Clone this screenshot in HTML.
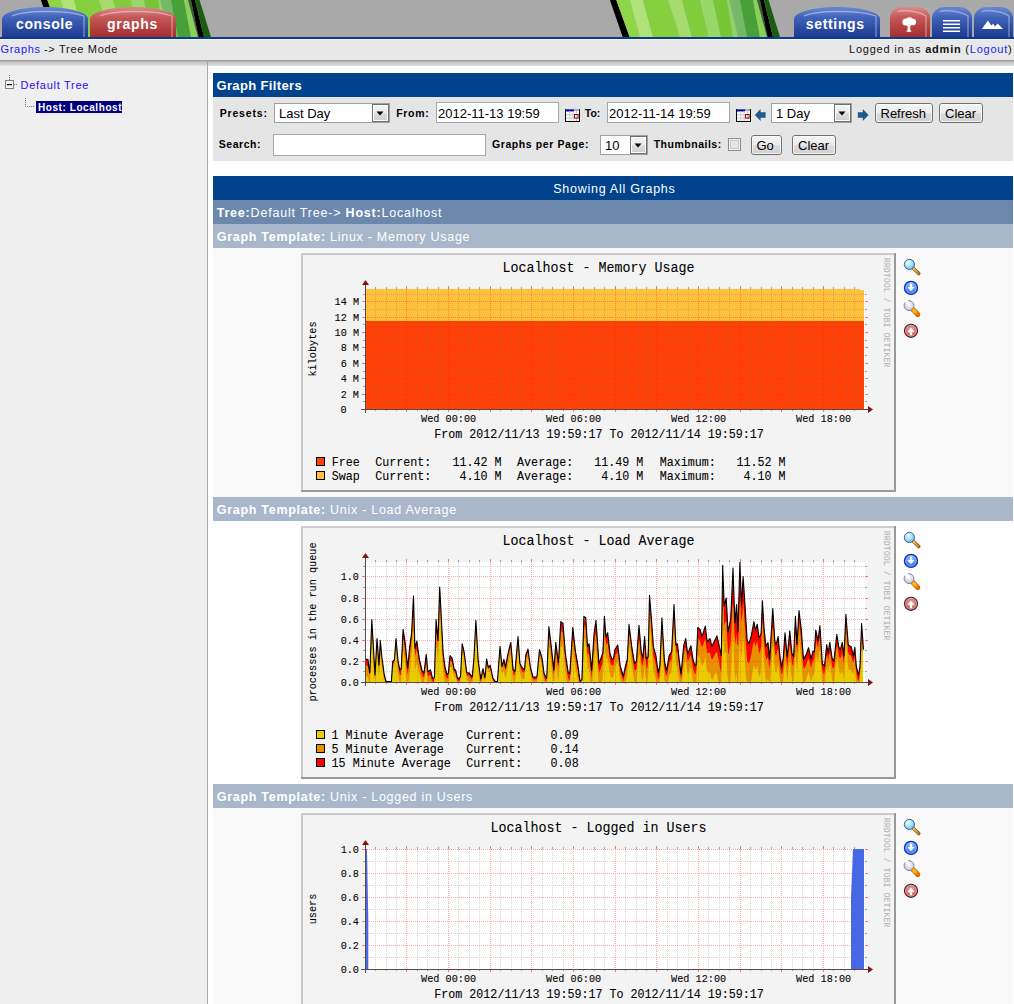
<!DOCTYPE html>
<html><head><meta charset="utf-8">
<style>
*{margin:0;padding:0}
html,body{width:1014px;height:1004px;overflow:hidden;background:#fff;font-family:"Liberation Sans",sans-serif;position:relative}
.a{position:absolute}
svg text{white-space:pre}
</style></head><body>
<svg class="a" style="left:0;top:0" width="1014" height="39" viewBox="0 0 1014 39">
<defs><linearGradient id="gb" x1="0" y1="0" x2="0" y2="1"><stop offset="0" stop-color="#6a88d4"/><stop offset=".35" stop-color="#4062b8"/><stop offset="1" stop-color="#1c3a90"/></linearGradient>
<linearGradient id="gr" x1="0" y1="0" x2="0" y2="1"><stop offset="0" stop-color="#dc8a8a"/><stop offset=".35" stop-color="#c45858"/><stop offset="1" stop-color="#a42e2e"/></linearGradient></defs>
<rect width="1014" height="37" fill="#a9a9a9"/>
<path d="M40.9 0L47.3 0L60.6 37L53.7 37Z" fill="#000"/>
<path d="M47.3 0L61.0 0L71.0 37L60.6 37Z" fill="#8fd548"/>
<path d="M61.0 0L74.0 0L84.0 37L71.0 37Z" fill="#b0e27a"/>
<path d="M74.0 0L99.0 0L111.0 37L84.0 37Z" fill="#86cf3f"/>
<path d="M99.0 0L113.0 0L123.0 37L111.0 37Z" fill="#a6dc6e"/>
<path d="M113.0 0L131.0 0L139.5 37L123.0 37Z" fill="#80cc3c"/>
<path d="M131.0 0L144.0 0L152.0 37L139.5 37Z" fill="#98d868"/>
<path d="M144.0 0L158.0 0L164.0 37L152.0 37Z" fill="#76c636"/>
<path d="M158.0 0L160.5 0L169.0 37L164.0 37Z" fill="#90d468"/>
<path d="M160.5 0L171.0 0L178.0 37L169.0 37Z" fill="#74b868"/>
<path d="M171.0 0L184.0 0L191.0 37L178.0 37Z" fill="#48a038"/>
<path d="M184.0 0L188.0 0L198.0 37L191.0 37Z" fill="#88d058"/>
<path d="M188.0 0L191.0 0L198.5 37L198.0 37Z" fill="#3a6030"/>
<path d="M191.0 0L195.0 0L204.0 37L198.5 37Z" fill="#000"/>
<path d="M195.0 0L199.5 0L211.0 37L204.0 37Z" fill="#1a5c10"/>
<path d="M609.9 0L616.3 0L629.6 37L622.7 37Z" fill="#000"/>
<path d="M616.3 0L630.0 0L640.0 37L629.6 37Z" fill="#8fd548"/>
<path d="M630.0 0L643.0 0L653.0 37L640.0 37Z" fill="#b0e27a"/>
<path d="M643.0 0L668.0 0L680.0 37L653.0 37Z" fill="#86cf3f"/>
<path d="M668.0 0L682.0 0L692.0 37L680.0 37Z" fill="#a6dc6e"/>
<path d="M682.0 0L700.0 0L708.5 37L692.0 37Z" fill="#80cc3c"/>
<path d="M700.0 0L713.0 0L721.0 37L708.5 37Z" fill="#98d868"/>
<path d="M713.0 0L727.0 0L733.0 37L721.0 37Z" fill="#76c636"/>
<path d="M727.0 0L729.5 0L738.0 37L733.0 37Z" fill="#90d468"/>
<path d="M729.5 0L740.0 0L747.0 37L738.0 37Z" fill="#74b868"/>
<path d="M740.0 0L753.0 0L760.0 37L747.0 37Z" fill="#48a038"/>
<path d="M753.0 0L757.0 0L767.0 37L760.0 37Z" fill="#88d058"/>
<path d="M757.0 0L760.0 0L767.5 37L767.0 37Z" fill="#3a6030"/>
<path d="M760.0 0L764.0 0L773.0 37L767.5 37Z" fill="#000"/>
<path d="M764.0 0L768.5 0L780.0 37L773.0 37Z" fill="#1a5c10"/>
<path d="M2 37V19C2 12.4 21.4 7 45.0 7C68.7 7 88 12.4 88 19V37Z" fill="url(#gb)"/><path d="M12 16C23.5 10.5 66.5 9.5 84 16V37" fill="none" stroke="#fff" stroke-opacity=".4" stroke-width="1.3"/><path d="M90 37V19C90 12.4 109.3 7 133.0 7C156.7 7 176 12.4 176 19V37Z" fill="url(#gr)"/><path d="M100 16C111.5 10.5 154.5 9.5 172 16V37" fill="none" stroke="#fff" stroke-opacity=".4" stroke-width="1.3"/><path d="M794 37V19C794 12.4 813.4 7 837.0 7C860.6 7 880 12.4 880 19V37Z" fill="url(#gb)"/><path d="M804 16C815.5 10.5 858.5 9.5 876 16V37" fill="none" stroke="#fff" stroke-opacity=".4" stroke-width="1.3"/><path d="M890 37V18C890 11.9 895.9 7 903 7H917C924.1 7 930 11.9 930 18V37Z" fill="url(#gr)"/><path d="M898 12C897.8 10 917.0 9.5 926 16V37" fill="none" stroke="#fff" stroke-opacity=".4" stroke-width="1.3"/><path d="M932 37V18C932 11.9 937.9 7 945 7H959C966.1 7 972 11.9 972 18V37Z" fill="url(#gb)"/><path d="M940 12C939.8 10 959.0 9.5 968 16V37" fill="none" stroke="#fff" stroke-opacity=".4" stroke-width="1.3"/><path d="M974 37V18C974 11.9 979.9 7 987 7H1000C1007.1 7 1013 11.9 1013 18V37Z" fill="url(#gb)"/><path d="M982 12C981.8 10 1000.0 9.5 1009 16V37" fill="none" stroke="#fff" stroke-opacity=".4" stroke-width="1.3"/>
<rect y="37" width="1014" height="2" fill="#0b3a94"/>
<g fill="#fff" font-family="Liberation Sans" font-weight="bold" font-size="14">
<text x="16" y="29" letter-spacing="0.62">console</text>
<text x="107" y="29" letter-spacing="0.72">graphs</text>
<text x="805.8" y="29" letter-spacing="0.66">settings</text>
</g>
<g fill="#fff">
<g><circle cx="906" cy="22" r="3.6"/><circle cx="909.5" cy="20.6" r="3.4"/><circle cx="912.8" cy="22" r="3.3"/><circle cx="909" cy="23.2" r="3"/><rect x="907.6" y="24" width="2.6" height="7.6"/><rect x="906.6" y="30.4" width="4.6" height="1.3"/></g>
<rect x="943" y="20" width="17" height="1.5"/><rect x="943" y="23.5" width="17" height="1.5"/><rect x="943" y="27" width="17" height="1.5"/><rect x="943" y="30.5" width="17" height="1.5"/>
<path d="M981.8 29L988 20.5L991.2 25.6L993.2 23.8L995 26.4L997.6 23.4L1003 29Z"/>
</g>
</svg>
<svg class="a" style="left:0;top:39px" width="1014" height="965" viewBox="0 39 1014 965">
<defs><linearGradient id="btn" x1="0" y1="0" x2="0" y2="1"><stop offset="0" stop-color="#f4f4f4"/><stop offset=".5" stop-color="#ebebeb"/><stop offset=".5" stop-color="#dddddd"/><stop offset="1" stop-color="#cfcfcf"/></linearGradient><linearGradient id="shd" x1="0" y1="0" x2="0" y2="1"><stop offset="0" stop-color="#989898"/><stop offset=".4" stop-color="#c4c4c4"/><stop offset="1" stop-color="#e2e2e2"/></linearGradient></defs><rect x="0" y="39" width="1014" height="21" fill="#e8e8e8"/><rect x="0" y="39" width="1014" height="1" fill="#f4f4ef"/><text x="0.5" y="53" font-size="11" font-weight="normal" fill="#1a1aee" letter-spacing="0.7" font-family="Liberation Sans">Graphs</text><text x="44" y="53" font-size="11" font-weight="normal" fill="#111" letter-spacing="0.7" font-family="Liberation Sans">-&gt; Tree Mode</text><text x="849" y="53" font-size="11" fill="#111" letter-spacing="0.78" font-family="Liberation Sans">Logged in as <tspan font-weight="bold">admin</tspan> (<tspan fill="#1a1aee">Logout</tspan>)</text><rect x="0" y="60" width="207" height="944" fill="#efefef"/><rect x="208" y="60" width="806" height="944" fill="#fff"/><rect x="0" y="60" width="1014" height="6" fill="url(#shd)"/><rect x="207" y="60" width="1" height="944" fill="#a8a8a8"/><rect x="5.5" y="80.5" width="8" height="8" fill="#f4f4f4" stroke="#808080"/><rect x="7" y="84" width="5" height="1.2" fill="#000"/><path d="M9.5 75v5M14 84.5h4M25.5 98v8M25 106.5h10" stroke="#777" stroke-dasharray="1 1" fill="none"/><text x="20.5" y="89" font-size="11" font-weight="normal" fill="#2a10f0" letter-spacing="0.73" font-family="Liberation Sans">Default Tree</text><rect x="36" y="101" width="86" height="12" fill="#00007f"/><text x="38" y="110.8" font-size="10" font-weight="bold" fill="#fff" letter-spacing="0.57" font-family="Liberation Sans">Host: Localhost</text><rect x="213" y="73" width="800" height="24" fill="#00438c"/><text x="216.5" y="89.5" font-size="13" font-weight="bold" fill="#fff" letter-spacing="0.35" font-family="Liberation Sans">Graph Filters</text><rect x="213" y="97" width="800" height="64" fill="#e5e5e5"/><text x="219.7" y="116.5" font-size="10.5" font-weight="bold" fill="#000" letter-spacing="0.83" font-family="Liberation Sans">Presets:</text><rect x="274.5" y="103.5" width="115" height="19" fill="#fff" stroke="#a0a0a0"/><rect x="372.5" y="104.5" width="16" height="17" fill="url(#btn)" stroke="#6f6f6f"/><rect x="373.5" y="105.5" width="14" height="15" fill="none" stroke="#fff" stroke-opacity=".9"/><path d="M376.5 111.5h7l-3.5 4z" fill="#000"/><text x="279" y="118" font-size="13" font-weight="normal" fill="#000" letter-spacing="0" font-family="Liberation Sans">Last Day</text><text x="396.3" y="116.5" font-size="10.5" font-weight="bold" fill="#000" letter-spacing="0.65" font-family="Liberation Sans">From:</text><rect x="436.5" y="102.5" width="122" height="20" fill="#fff" stroke="#a3a9b0"/><text x="438" y="117.5" font-size="13" font-weight="normal" fill="#000" letter-spacing="0" font-family="Liberation Sans">2012-11-13 19:59</text><rect x="565" y="109" width="15" height="13" fill="#000"/><rect x="566" y="109" width="13" height="12" fill="#fff"/><rect x="566" y="109" width="13" height="2" fill="#a8a8c8"/><rect x="566" y="109.5" width="8" height="2" fill="#0000a0"/><rect x="569.3" y="111" width="1" height="10" fill="#c8c8c8"/><rect x="572.6" y="111" width="1" height="10" fill="#c8c8c8"/><rect x="575.9" y="111" width="1" height="10" fill="#c8c8c8"/><rect x="566" y="114.3" width="13" height="1" fill="#c8c8c8"/><rect x="566" y="117.6" width="13" height="1" fill="#c8c8c8"/><rect x="574.5" y="114.5" width="3.6" height="3.6" fill="none" stroke="#a00000" stroke-width="1"/><text x="584.8" y="116.5" font-size="10.5" font-weight="bold" fill="#000" letter-spacing="0" font-family="Liberation Sans">To:</text><rect x="607.5" y="102.5" width="122" height="20" fill="#fff" stroke="#a3a9b0"/><text x="609" y="117.5" font-size="13" font-weight="normal" fill="#000" letter-spacing="0" font-family="Liberation Sans">2012-11-14 19:59</text><rect x="736" y="109" width="15" height="13" fill="#000"/><rect x="737" y="109" width="13" height="12" fill="#fff"/><rect x="737" y="109" width="13" height="2" fill="#a8a8c8"/><rect x="737" y="109.5" width="8" height="2" fill="#0000a0"/><rect x="740.3" y="111" width="1" height="10" fill="#c8c8c8"/><rect x="743.6" y="111" width="1" height="10" fill="#c8c8c8"/><rect x="746.9" y="111" width="1" height="10" fill="#c8c8c8"/><rect x="737" y="114.3" width="13" height="1" fill="#c8c8c8"/><rect x="737" y="117.6" width="13" height="1" fill="#c8c8c8"/><rect x="745.5" y="114.5" width="3.6" height="3.6" fill="none" stroke="#a00000" stroke-width="1"/><path d="M754.8 115L760.6 109V112.2H765.6V117.8H760.6V121Z" fill="#1f5a8c"/><rect x="771.5" y="103.5" width="80" height="19" fill="#fff" stroke="#a0a0a0"/><rect x="834.5" y="104.5" width="16" height="17" fill="url(#btn)" stroke="#6f6f6f"/><rect x="835.5" y="105.5" width="14" height="15" fill="none" stroke="#fff" stroke-opacity=".9"/><path d="M838.5 111.5h7l-3.5 4z" fill="#000"/><text x="776" y="118" font-size="13" font-weight="normal" fill="#000" letter-spacing="0" font-family="Liberation Sans">1 Day</text><path d="M868.6 115L862.8 109V112.2H857.8V117.8H862.8V121Z" fill="#1f5a8c"/><rect x="875.5" y="103.5" width="57" height="19" rx="2.5" fill="url(#btn)" stroke="#707070"/><rect x="876.5" y="104.5" width="55" height="17" rx="1.5" fill="none" stroke="#fff" stroke-opacity=".7"/><text x="880.5" y="117.5" font-size="13" font-weight="normal" fill="#000" letter-spacing="0" font-family="Liberation Sans">Refresh</text><rect x="939.5" y="103.5" width="43" height="19" rx="2.5" fill="url(#btn)" stroke="#707070"/><rect x="940.5" y="104.5" width="41" height="17" rx="1.5" fill="none" stroke="#fff" stroke-opacity=".7"/><text x="945" y="117.5" font-size="13" font-weight="normal" fill="#000" letter-spacing="0" font-family="Liberation Sans">Clear</text><text x="218.8" y="148.3" font-size="10.5" font-weight="bold" fill="#000" letter-spacing="0.52" font-family="Liberation Sans">Search:</text><rect x="273.5" y="134.5" width="212" height="21" fill="#fff" stroke="#a3a9b0"/><text x="492" y="148.3" font-size="10.5" font-weight="bold" fill="#000" letter-spacing="0.59" font-family="Liberation Sans">Graphs per Page:</text><rect x="600.5" y="135.5" width="47" height="19" fill="#fff" stroke="#a0a0a0"/><rect x="630.5" y="136.5" width="16" height="17" fill="url(#btn)" stroke="#6f6f6f"/><rect x="631.5" y="137.5" width="14" height="15" fill="none" stroke="#fff" stroke-opacity=".9"/><path d="M634.5 143.5h7l-3.5 4z" fill="#000"/><text x="605" y="150" font-size="13" font-weight="normal" fill="#000" letter-spacing="0" font-family="Liberation Sans">10</text><text x="653.7" y="148.3" font-size="10.5" font-weight="bold" fill="#000" letter-spacing="0.51" font-family="Liberation Sans">Thumbnails:</text><rect x="728.5" y="138.5" width="12" height="12" fill="#f0f0f0" stroke="#8f8f8f"/><rect x="730.5" y="140.5" width="8" height="8" fill="#e6e6e6" stroke="#c8c8c8"/><rect x="751.5" y="135.5" width="30" height="19" rx="2.5" fill="url(#btn)" stroke="#707070"/><rect x="752.5" y="136.5" width="28" height="17" rx="1.5" fill="none" stroke="#fff" stroke-opacity=".7"/><text x="756.5" y="149.5" font-size="13" font-weight="normal" fill="#000" letter-spacing="0" font-family="Liberation Sans">Go</text><rect x="792.5" y="135.5" width="43" height="19" rx="2.5" fill="url(#btn)" stroke="#707070"/><rect x="793.5" y="136.5" width="41" height="17" rx="1.5" fill="none" stroke="#fff" stroke-opacity=".7"/><text x="798" y="149.5" font-size="13" font-weight="normal" fill="#000" letter-spacing="0" font-family="Liberation Sans">Clear</text><rect x="213" y="176" width="800" height="24" fill="#00438c"/><text x="553.3" y="192.6" font-size="12.5" font-weight="normal" fill="#fff" letter-spacing="0.73" font-family="Liberation Sans">Showing All Graphs</text><rect x="213" y="200" width="800" height="24" fill="#6d88ad"/><text x="216.7" y="217.3" font-size="12.5" fill="#fff" letter-spacing="0.8" font-family="Liberation Sans"><tspan font-weight="bold">Tree:</tspan>Default Tree-&gt; <tspan font-weight="bold">Host:</tspan>Localhost</text><rect x="213" y="224" width="800" height="24" fill="#a9b7cb"/><text x="216.7" y="241.2" font-size="12.5" fill="#fff" letter-spacing="0.72" font-family="Liberation Sans"><tspan font-weight="bold">Graph Template:</tspan> Linux - Memory Usage</text><rect x="213" y="248" width="800" height="249" fill="#f9f9f9"/><rect x="213" y="497" width="800" height="24" fill="#a9b7cb"/><text x="216.7" y="514.2" font-size="12.5" fill="#fff" letter-spacing="0.72" font-family="Liberation Sans"><tspan font-weight="bold">Graph Template:</tspan> Unix - Load Average</text><rect x="213" y="521" width="800" height="263" fill="#ffffff"/><rect x="213" y="784" width="800" height="24" fill="#a9b7cb"/><text x="216.7" y="801.2" font-size="12.5" fill="#fff" letter-spacing="0.72" font-family="Liberation Sans"><tspan font-weight="bold">Graph Template:</tspan> Unix - Logged in Users</text><rect x="213" y="808" width="800" height="196" fill="#f9f9f9"/><rect x="301" y="253" width="595" height="239" fill="#f3f3f3"/><path d="M302 492V254H896" stroke="#cbcbcb" stroke-width="2" fill="none"/><path d="M301 491H895V253" stroke="#999" stroke-width="2" fill="none"/><rect x="365" y="289" width="500" height="120" fill="#fff"/><rect x="366" y="289" width="498" height="120" fill="#ffc13b"/><rect x="860" y="289" width="4" height="1" fill="#fff"/><rect x="366" y="321" width="498" height="88" fill="#ff4105"/><path d="M375.5 289V409M386.5 289V409M396.5 289V409M417.5 289V409M427.5 289V409M438.5 289V409M458.5 289V409M469.5 289V409M479.5 289V409M500.5 289V409M511.5 289V409M521.5 289V409M542.5 289V409M552.5 289V409M563.5 289V409M583.5 289V409M594.5 289V409M604.5 289V409M625.5 289V409M636.5 289V409M646.5 289V409M667.5 289V409M677.5 289V409M688.5 289V409M708.5 289V409M719.5 289V409M729.5 289V409M750.5 289V409M761.5 289V409M771.5 289V409M792.5 289V409M802.5 289V409M813.5 289V409M833.5 289V409M844.5 289V409M854.5 289V409M365 401.5H865M365 386.5H865M365 371.5H865M365 355.5H865M365 340.5H865M365 324.5H865M365 309.5H865M365 294.5H865" stroke="#7c7c7c" stroke-opacity=".3" stroke-dasharray="1 1" fill="none" shape-rendering="crispEdges"/><path d="M406.5 289V409M448.5 289V409M490.5 289V409M531.5 289V409M573.5 289V409M615.5 289V409M656.5 289V409M698.5 289V409M740.5 289V409M781.5 289V409M823.5 289V409M365 394.5H865M365 378.5H865M365 363.5H865M365 347.5H865M365 332.5H865M365 317.5H865M365 301.5H865" stroke="#ff2020" stroke-opacity=".38" stroke-dasharray="1 1" fill="none" shape-rendering="crispEdges"/><path d="M375.5 409V411M375.5 287V289M386.5 409V411M386.5 287V289M396.5 409V411M396.5 287V289M417.5 409V411M417.5 287V289M427.5 409V411M427.5 287V289M438.5 409V411M438.5 287V289M458.5 409V411M458.5 287V289M469.5 409V411M469.5 287V289M479.5 409V411M479.5 287V289M500.5 409V411M500.5 287V289M511.5 409V411M511.5 287V289M521.5 409V411M521.5 287V289M542.5 409V411M542.5 287V289M552.5 409V411M552.5 287V289M563.5 409V411M563.5 287V289M583.5 409V411M583.5 287V289M594.5 409V411M594.5 287V289M604.5 409V411M604.5 287V289M625.5 409V411M625.5 287V289M636.5 409V411M636.5 287V289M646.5 409V411M646.5 287V289M667.5 409V411M667.5 287V289M677.5 409V411M677.5 287V289M688.5 409V411M688.5 287V289M708.5 409V411M708.5 287V289M719.5 409V411M719.5 287V289M729.5 409V411M729.5 287V289M750.5 409V411M750.5 287V289M761.5 409V411M761.5 287V289M771.5 409V411M771.5 287V289M792.5 409V411M792.5 287V289M802.5 409V411M802.5 287V289M813.5 409V411M813.5 287V289M833.5 409V411M833.5 287V289M844.5 409V411M844.5 287V289M854.5 409V411M854.5 287V289M363 401.5H365M865 401.5H867M363 386.5H365M865 386.5H867M363 371.5H365M865 371.5H867M363 355.5H365M865 355.5H867M363 340.5H365M865 340.5H867M363 324.5H365M865 324.5H867M363 309.5H365M865 309.5H867M363 294.5H365M865 294.5H867" stroke="#8c8c8c" stroke-opacity=".8" fill="none" shape-rendering="crispEdges"/><path d="M365.5 409V412M365.5 286V289M406.5 409V412M406.5 286V289M448.5 409V412M448.5 286V289M490.5 409V412M490.5 286V289M531.5 409V412M531.5 286V289M573.5 409V412M573.5 286V289M615.5 409V412M615.5 286V289M656.5 409V412M656.5 286V289M698.5 409V412M698.5 286V289M740.5 409V412M740.5 286V289M781.5 409V412M781.5 286V289M823.5 409V412M823.5 286V289M362 394.5H365M865 394.5H868M362 378.5H365M865 378.5H868M362 363.5H365M865 363.5H868M362 347.5H365M865 347.5H868M362 332.5H365M865 332.5H868M362 317.5H365M865 317.5H868M362 301.5H365M865 301.5H868" stroke="#ff4040" stroke-opacity=".7" fill="none" shape-rendering="crispEdges"/><path d="M361 409.5H869M365.5 413V285" stroke="#5b4848" fill="none" shape-rendering="crispEdges"/><path d="M868 406L873 409.5L868 413Z" fill="#7f1515"/><path d="M362 285L365.5 280L369 285Z" fill="#7f1515"/><text transform="translate(598.5,272) scale(1,1.08)" font-family="Liberation Mono" font-size="13.35" fill="#000" stroke="#000" stroke-width=".08" text-anchor="middle">Localhost - Memory Usage</text><text transform="translate(448.6,422.2) scale(1,1.08)" font-family="Liberation Mono" font-size="10.2" fill="#000" stroke="#000" stroke-width=".08" text-anchor="middle">Wed 00:00</text><text transform="translate(573.6,422.2) scale(1,1.08)" font-family="Liberation Mono" font-size="10.2" fill="#000" stroke="#000" stroke-width=".08" text-anchor="middle">Wed 06:00</text><text transform="translate(698.6,422.2) scale(1,1.08)" font-family="Liberation Mono" font-size="10.2" fill="#000" stroke="#000" stroke-width=".08" text-anchor="middle">Wed 12:00</text><text transform="translate(823.6,422.2) scale(1,1.08)" font-family="Liberation Mono" font-size="10.2" fill="#000" stroke="#000" stroke-width=".08" text-anchor="middle">Wed 18:00</text><text transform="translate(434.3,437.8) scale(1,1.08)" font-family="Liberation Mono" font-size="11.7" fill="#000" stroke="#000" stroke-width=".08">From 2012/11/13 19:59:17 To 2012/11/14 19:59:17</text><text transform="translate(316,349) rotate(-90) scale(1,1.08)" x="0" y="0" font-family="Liberation Mono" font-size="10.2" stroke="#000" stroke-width=".08" text-anchor="middle">kilobytes</text><text transform="translate(884,257.8) rotate(90)" x="0" y="0" font-family="Liberation Mono" font-size="8.3" fill="#b0b0b0" letter-spacing="0">RRDTOOL / TOBI OETIKER</text><text transform="translate(340.6,413) scale(1,1.08)" font-family="Liberation Mono" font-size="10.2" fill="#000" stroke="#000" stroke-width=".08">0</text><text transform="translate(359,398) scale(1,1.08)" font-family="Liberation Mono" font-size="10.2" fill="#000" stroke="#000" stroke-width=".08" text-anchor="end">2 M</text><text transform="translate(359,382) scale(1,1.08)" font-family="Liberation Mono" font-size="10.2" fill="#000" stroke="#000" stroke-width=".08" text-anchor="end">4 M</text><text transform="translate(359,367) scale(1,1.08)" font-family="Liberation Mono" font-size="10.2" fill="#000" stroke="#000" stroke-width=".08" text-anchor="end">6 M</text><text transform="translate(359,351) scale(1,1.08)" font-family="Liberation Mono" font-size="10.2" fill="#000" stroke="#000" stroke-width=".08" text-anchor="end">8 M</text><text transform="translate(359,336) scale(1,1.08)" font-family="Liberation Mono" font-size="10.2" fill="#000" stroke="#000" stroke-width=".08" text-anchor="end">10 M</text><text transform="translate(359,321) scale(1,1.08)" font-family="Liberation Mono" font-size="10.2" fill="#000" stroke="#000" stroke-width=".08" text-anchor="end">12 M</text><text transform="translate(359,305) scale(1,1.08)" font-family="Liberation Mono" font-size="10.2" fill="#000" stroke="#000" stroke-width=".08" text-anchor="end">14 M</text><rect x="316.5" y="457.5" width="8" height="8" fill="#ff4105" stroke="#000"/><rect x="316.5" y="471.5" width="8" height="8" fill="#ffc13b" stroke="#000"/><text transform="translate(331.7,465.6) scale(1,1.08)" font-family="Liberation Mono" font-size="11.7" fill="#000" stroke="#000" stroke-width=".08">Free</text><text transform="translate(375.3,465.6) scale(1,1.08)" font-family="Liberation Mono" font-size="11.7" fill="#000" stroke="#000" stroke-width=".08">Current:</text><text transform="translate(452.5,465.6) scale(1,1.08)" font-family="Liberation Mono" font-size="11.7" fill="#000" stroke="#000" stroke-width=".08" xml:space="preserve">11.42 M</text><text transform="translate(517.1,465.6) scale(1,1.08)" font-family="Liberation Mono" font-size="11.7" fill="#000" stroke="#000" stroke-width=".08">Average:</text><text transform="translate(594.3,465.6) scale(1,1.08)" font-family="Liberation Mono" font-size="11.7" fill="#000" stroke="#000" stroke-width=".08" xml:space="preserve">11.49 M</text><text transform="translate(659.7,465.6) scale(1,1.08)" font-family="Liberation Mono" font-size="11.7" fill="#000" stroke="#000" stroke-width=".08">Maximum:</text><text transform="translate(736.4,465.6) scale(1,1.08)" font-family="Liberation Mono" font-size="11.7" fill="#000" stroke="#000" stroke-width=".08" xml:space="preserve">11.52 M</text><text transform="translate(331.7,479.6) scale(1,1.08)" font-family="Liberation Mono" font-size="11.7" fill="#000" stroke="#000" stroke-width=".08">Swap</text><text transform="translate(375.3,479.6) scale(1,1.08)" font-family="Liberation Mono" font-size="11.7" fill="#000" stroke="#000" stroke-width=".08">Current:</text><text transform="translate(452.5,479.6) scale(1,1.08)" font-family="Liberation Mono" font-size="11.7" fill="#000" stroke="#000" stroke-width=".08" xml:space="preserve"> 4.10 M</text><text transform="translate(517.1,479.6) scale(1,1.08)" font-family="Liberation Mono" font-size="11.7" fill="#000" stroke="#000" stroke-width=".08">Average:</text><text transform="translate(594.3,479.6) scale(1,1.08)" font-family="Liberation Mono" font-size="11.7" fill="#000" stroke="#000" stroke-width=".08" xml:space="preserve"> 4.10 M</text><text transform="translate(659.7,479.6) scale(1,1.08)" font-family="Liberation Mono" font-size="11.7" fill="#000" stroke="#000" stroke-width=".08">Maximum:</text><text transform="translate(736.4,479.6) scale(1,1.08)" font-family="Liberation Mono" font-size="11.7" fill="#000" stroke="#000" stroke-width=".08" xml:space="preserve"> 4.10 M</text><rect x="301" y="526" width="595" height="253" fill="#f3f3f3"/><path d="M302 779V527H896" stroke="#cbcbcb" stroke-width="2" fill="none"/><path d="M301 778H895V526" stroke="#999" stroke-width="2" fill="none"/><rect x="365" y="562" width="500" height="120" fill="#fff"/><path d="M366.0 682L366.0 659.4L367.0 659.4L368.0 660.1L369.0 667.3L370.0 668.0L371.0 641.3L372.0 622.9L373.0 640.1L374.0 657.4L375.0 674.7L376.0 657.1L377.0 638.9L378.0 651.6L379.0 665.0L380.0 646.8L381.0 647.5L382.0 657.5L383.0 665.1L384.0 672.7L385.0 677.3L386.0 681.1L387.0 681.6L388.0 681.6L389.0 681.6L390.0 681.6L390.9 681.6L391.9 673.1L392.9 661.2L393.9 660.4L394.9 652.7L395.9 639.3L396.9 649.1L397.9 660.2L398.9 665.4L399.9 669.8L400.9 668.8L401.9 653.5L402.9 633.0L403.9 634.8L404.9 641.2L405.9 650.4L406.9 660.2L407.9 665.6L408.9 655.0L409.9 645.5L410.9 638.3L411.9 627.3L412.9 607.7L413.9 611.2L414.9 648.3L415.9 644.5L416.9 641.8L417.9 648.8L418.9 655.8L419.9 661.5L420.9 665.8L421.9 670.0L422.9 671.7L423.9 672.9L424.9 665.5L425.9 656.9L426.9 661.2L427.9 671.6L428.9 671.1L429.9 670.4L430.9 671.5L431.9 675.7L432.9 678.3L433.9 677.9L434.9 661.9L435.9 627.8L436.9 627.9L437.9 638.9L438.9 613.6L439.9 589.9L440.9 609.1L441.8 628.2L442.8 647.4L443.8 658.6L444.8 665.4L445.8 670.1L446.8 673.6L447.8 673.7L448.8 668.3L449.8 657.3L450.8 656.5L451.8 657.8L452.8 662.0L453.8 667.3L454.8 669.9L455.8 670.9L456.8 675.5L457.8 678.1L458.8 678.9L459.8 677.5L460.8 670.5L461.8 651.3L462.8 646.3L463.8 650.4L464.8 657.2L465.8 665.3L466.8 672.5L467.8 672.8L468.8 673.0L469.8 673.8L470.8 675.1L471.8 676.4L472.8 670.7L473.8 660.0L474.8 641.8L475.8 622.6L476.8 635.7L477.8 653.3L478.8 664.7L479.8 671.8L480.8 678.8L481.8 674.4L482.8 669.6L483.8 672.0L484.8 676.6L485.8 668.7L486.8 659.6L487.8 664.6L488.8 666.8L489.8 665.8L490.8 667.9L491.7 672.7L492.7 677.4L493.7 679.1L494.7 680.6L495.7 681.6L496.7 681.6L497.7 677.1L498.7 663.5L499.7 650.0L500.7 653.8L501.7 663.9L502.7 663.8L503.7 660.1L504.7 663.2L505.7 666.6L506.7 660.5L507.7 655.2L508.7 650.7L509.7 646.6L510.7 642.7L511.7 653.3L512.7 665.2L513.7 670.3L514.7 671.0L515.7 663.1L516.7 651.6L517.7 640.1L518.7 646.4L519.7 660.5L520.7 664.9L521.7 666.9L522.7 668.1L523.7 669.1L524.7 667.8L525.7 656.3L526.7 652.5L527.7 649.9L528.7 654.1L529.7 661.7L530.7 668.3L531.7 672.0L532.7 675.8L533.7 677.0L534.7 677.0L535.7 677.0L536.7 677.0L537.7 669.0L538.7 658.5L539.7 650.1L540.6 653.4L541.6 656.6L542.6 662.4L543.6 670.2L544.6 674.8L545.6 676.5L546.6 678.3L547.6 656.3L548.6 632.8L549.6 632.7L550.6 641.2L551.6 649.9L552.6 658.7L553.6 667.5L554.6 659.5L555.6 645.0L556.6 648.8L557.6 656.6L558.6 659.0L559.6 641.9L560.6 624.9L561.6 622.3L562.6 623.2L563.6 631.2L564.6 644.0L565.6 654.9L566.6 661.7L567.6 668.4L568.6 672.8L569.6 673.6L570.6 661.6L571.6 646.2L572.6 630.8L573.6 634.6L574.6 643.6L575.6 652.0L576.6 657.6L577.6 663.3L578.6 670.5L579.6 677.9L580.6 680.6L581.6 679.9L582.6 658.6L583.6 627.0L584.6 616.9L585.6 617.5L586.6 630.5L587.6 646.3L588.6 644.7L589.6 648.4L590.5 658.7L591.5 668.9L592.5 657.1L593.5 641.2L594.5 630.3L595.5 623.5L596.5 628.1L597.5 642.7L598.5 657.2L599.5 662.4L600.5 659.5L601.5 656.6L602.5 653.9L603.5 637.7L604.5 618.0L605.5 631.0L606.5 635.9L607.5 633.2L608.5 640.2L609.5 649.3L610.5 654.8L611.5 657.9L612.5 659.0L613.5 658.2L614.5 652.2L615.5 648.6L616.5 647.1L617.5 645.5L618.5 651.1L619.5 659.9L620.5 666.6L621.5 670.0L622.5 673.3L623.5 676.0L624.5 670.8L625.5 666.0L626.5 662.4L627.5 655.8L628.5 635.1L629.5 628.0L630.5 636.1L631.5 644.2L632.5 651.1L633.5 657.1L634.5 663.2L635.5 662.4L636.5 660.6L637.5 646.7L638.5 632.8L639.5 630.6L640.5 642.6L641.4 652.5L642.4 656.4L643.4 651.2L644.4 638.6L645.4 648.3L646.4 658.6L647.4 657.6L648.4 645.7L649.4 598.6L650.4 606.6L651.4 618.7L652.4 632.7L653.4 646.5L654.4 650.3L655.4 654.0L656.4 659.3L657.4 666.7L658.4 671.7L659.4 667.9L660.4 653.7L661.4 629.6L662.4 626.3L663.4 643.3L664.4 660.3L665.4 665.3L666.4 669.0L667.4 666.6L668.4 660.1L669.4 655.1L670.4 653.6L671.4 652.1L672.4 637.6L673.4 617.2L674.4 612.7L675.4 633.9L676.4 644.6L677.4 643.9L678.4 652.2L679.4 661.3L680.4 668.5L681.4 670.9L682.4 660.1L683.4 649.3L684.4 643.3L685.4 639.7L686.4 643.7L687.4 651.5L688.4 652.5L689.4 649.8L690.4 647.2L691.3 648.6L692.3 655.2L693.3 660.3L694.3 663.7L695.3 665.3L696.3 660.0L697.3 637.8L698.3 627.9L699.3 628.8L700.3 630.3L701.3 634.1L702.3 635.6L703.3 632.4L704.3 629.2L705.3 626.3L706.3 634.5L707.3 641.7L708.3 640.4L709.3 639.2L710.3 640.2L711.3 644.4L712.3 645.4L713.3 643.4L714.3 641.3L715.3 639.3L716.3 637.3L717.3 637.2L718.3 641.8L719.3 646.3L720.3 650.9L721.3 655.4L722.3 592.0L723.3 581.2L724.3 605.6L725.3 601.7L726.3 599.5L727.3 617.3L728.3 631.1L729.3 626.1L730.3 621.2L731.3 606.4L732.3 584.3L733.3 575.6L734.3 604.5L735.3 619.0L736.3 608.3L737.3 618.4L738.3 619.6L739.3 584.8L740.2 571.6L741.2 598.5L742.2 591.9L743.2 578.7L744.2 593.7L745.2 608.9L746.2 625.5L747.2 640.1L748.2 642.2L749.2 643.0L750.2 639.6L751.2 636.1L752.2 630.8L753.2 625.3L754.2 623.4L755.2 629.1L756.2 628.0L757.2 624.3L758.2 631.5L759.2 637.7L760.2 635.7L761.2 631.2L762.2 605.7L763.2 614.0L764.2 629.8L765.2 639.6L766.2 645.8L767.2 643.9L768.2 644.5L769.2 655.1L770.2 649.9L771.2 634.0L772.2 618.2L773.2 614.8L774.2 631.0L775.2 642.2L776.2 644.7L777.2 640.5L778.2 637.4L779.2 648.0L780.2 657.9L781.2 664.5L782.2 664.0L783.2 658.3L784.2 644.9L785.2 634.5L786.2 645.4L787.2 656.3L788.2 647.2L789.2 637.2L790.1 634.6L791.1 645.7L792.1 653.6L793.1 655.7L794.1 646.3L795.1 622.6L796.1 629.3L797.1 642.1L798.1 625.2L799.1 611.6L800.1 619.9L801.1 628.2L802.1 641.1L803.1 654.4L804.1 658.3L805.1 656.6L806.1 654.8L807.1 651.9L808.1 648.9L809.1 650.4L810.1 654.7L811.1 659.0L812.1 654.5L813.1 651.1L814.1 651.6L815.1 640.9L816.1 631.6L817.1 636.5L818.1 640.1L819.1 632.0L820.1 628.5L821.1 644.6L822.1 660.6L823.1 664.8L824.1 665.8L825.1 660.5L826.1 650.6L827.1 646.8L828.1 653.0L829.1 647.0L830.1 644.3L831.1 651.2L832.1 658.1L833.1 659.9L834.1 659.7L835.1 650.5L836.1 641.3L837.1 636.0L838.1 642.2L839.1 647.6L840.0 649.1L841.0 647.1L842.0 643.4L843.0 648.4L844.0 655.2L845.0 633.2L846.0 616.0L847.0 628.9L848.0 641.9L849.0 645.7L850.0 646.1L851.0 646.6L852.0 650.2L853.0 654.5L854.0 652.2L855.0 650.2L856.0 662.7L857.0 669.2L858.0 673.3L859.0 672.0L860.0 664.8L861.0 639.0L862.0 629.2L863.0 642.8L863.0 682Z" fill="#ff0000"/><path d="M366.0 682L366.0 665.4L367.0 665.7L368.0 666.2L369.0 673.0L370.0 673.4L371.0 646.5L372.0 627.8L373.0 644.7L374.0 661.7L375.0 679.1L376.0 661.6L377.0 643.4L378.0 655.8L379.0 668.7L380.0 650.1L381.0 650.6L382.0 660.5L383.0 667.9L384.0 675.1L385.0 679.5L386.0 682.0L387.0 682.0L388.0 682.0L389.0 682.0L390.0 682.0L390.9 682.0L391.9 675.6L392.9 663.8L393.9 663.1L394.9 655.6L395.9 642.4L396.9 652.7L397.9 664.2L398.9 670.3L399.9 675.5L400.9 674.8L401.9 659.8L402.9 639.5L403.9 641.7L404.9 648.7L405.9 658.4L406.9 668.8L407.9 674.7L408.9 664.0L409.9 654.1L410.9 646.6L411.9 635.5L412.9 615.9L413.9 619.2L414.9 656.3L415.9 652.4L416.9 649.2L417.9 655.5L418.9 661.7L419.9 666.6L420.9 670.2L421.9 674.6L422.9 676.4L423.9 677.6L424.9 670.3L425.9 662.0L426.9 666.3L427.9 676.3L428.9 675.6L429.9 675.1L430.9 676.5L431.9 680.6L432.9 682.0L433.9 682.0L434.9 668.0L435.9 634.3L436.9 634.8L437.9 646.1L438.9 621.0L439.9 597.3L440.9 616.4L441.8 635.3L442.8 654.1L443.8 665.0L444.8 671.6L445.8 675.8L446.8 678.6L447.8 678.5L448.8 673.0L449.8 662.0L450.8 660.7L451.8 661.4L452.8 665.2L453.8 669.9L454.8 672.3L455.8 673.5L456.8 678.2L457.8 680.9L458.8 681.7L459.8 680.2L460.8 673.1L461.8 654.0L462.8 648.9L463.8 653.0L464.8 659.9L465.8 667.9L466.8 675.3L467.8 675.6L468.8 675.9L469.8 676.9L470.8 678.4L471.8 679.8L472.8 674.1L473.8 663.4L474.8 645.1L475.8 625.9L476.8 639.0L477.8 656.6L478.8 668.1L479.8 675.1L480.8 682.0L481.8 677.5L482.8 672.3L483.8 674.5L484.8 678.9L485.8 671.0L486.8 661.8L487.8 666.8L488.8 669.0L489.8 667.8L490.8 669.9L491.7 674.6L492.7 679.4L493.7 681.2L494.7 682.0L495.7 682.0L496.7 682.0L497.7 679.3L498.7 665.9L499.7 652.5L500.7 656.4L501.7 666.7L502.7 667.0L503.7 663.6L504.7 667.0L505.7 670.5L506.7 664.2L507.7 658.8L508.7 654.3L509.7 650.2L510.7 646.4L511.7 657.2L512.7 669.5L513.7 674.8L514.7 675.4L515.7 667.3L516.7 655.5L517.7 643.7L518.7 649.7L519.7 663.8L520.7 668.4L521.7 670.5L522.7 671.8L523.7 672.7L524.7 671.2L525.7 659.4L526.7 655.5L527.7 652.8L528.7 656.9L529.7 664.5L530.7 670.9L531.7 674.7L532.7 678.4L533.7 679.6L534.7 679.6L535.7 679.6L536.7 679.6L537.7 671.6L538.7 661.0L539.7 652.6L540.6 655.9L541.6 659.3L542.6 665.5L543.6 673.7L544.6 678.5L545.6 680.4L546.6 682.0L547.6 660.8L548.6 637.8L549.6 638.4L550.6 647.5L551.6 656.5L552.6 665.6L553.6 674.6L554.6 666.6L555.6 652.0L556.6 655.9L557.6 663.9L558.6 666.8L559.6 650.2L560.6 633.5L561.6 631.1L562.6 631.7L563.6 639.2L564.6 651.6L565.6 662.2L566.6 668.8L567.6 675.2L568.6 679.5L569.6 680.4L570.6 668.4L571.6 653.2L572.6 637.9L573.6 641.6L574.6 650.5L575.6 658.6L576.6 664.0L577.6 669.5L578.6 676.8L579.6 682.0L580.6 682.0L581.6 682.0L582.6 666.1L583.6 634.9L584.6 625.0L585.6 625.7L586.6 638.7L587.6 654.6L588.6 653.2L589.6 657.4L590.5 668.0L591.5 678.2L592.5 666.3L593.5 650.5L594.5 639.9L595.5 633.2L596.5 638.1L597.5 652.9L598.5 667.6L599.5 672.6L600.5 669.3L601.5 666.2L602.5 663.4L603.5 647.0L604.5 627.1L605.5 640.1L606.5 645.1L607.5 642.2L608.5 648.9L609.5 657.7L610.5 662.5L611.5 665.0L612.5 665.7L613.5 664.7L614.5 658.7L615.5 655.2L616.5 653.6L617.5 651.9L618.5 657.3L619.5 665.6L620.5 671.9L621.5 675.0L622.5 678.2L623.5 680.9L624.5 676.1L625.5 671.5L626.5 668.1L627.5 661.7L628.5 641.1L629.5 634.2L630.5 642.5L631.5 650.8L632.5 657.9L633.5 664.1L634.5 670.4L635.5 670.2L636.5 668.8L637.5 655.3L638.5 641.9L639.5 640.0L640.5 652.1L641.4 662.2L642.4 666.2L643.4 661.3L644.4 648.6L645.4 658.0L646.4 668.2L647.4 667.4L648.4 655.9L649.4 609.0L650.4 617.0L651.4 628.7L652.4 642.3L653.4 655.6L654.4 659.1L655.4 662.9L656.4 667.9L657.4 675.0L658.4 679.8L659.4 675.9L660.4 661.9L661.4 637.9L662.4 634.7L663.4 651.7L664.4 668.3L665.4 672.9L666.4 676.4L667.4 673.9L668.4 667.4L669.4 662.3L670.4 660.9L671.4 659.8L672.4 645.7L673.4 625.5L674.4 621.2L675.4 642.4L676.4 652.9L677.4 651.9L678.4 660.2L679.4 669.3L680.4 676.3L681.4 678.3L682.4 667.4L683.4 656.8L684.4 651.1L685.4 647.8L686.4 652.0L687.4 659.9L688.4 660.8L689.4 657.9L690.4 655.2L691.3 656.9L692.3 663.6L693.3 669.0L694.3 672.8L695.3 674.9L696.3 670.0L697.3 648.1L698.3 638.5L699.3 639.6L700.3 641.3L701.3 645.3L702.3 647.2L703.3 644.4L704.3 641.3L705.3 638.2L706.3 646.3L707.3 653.3L708.3 652.7L709.3 652.3L710.3 653.9L711.3 658.5L712.3 659.8L713.3 657.8L714.3 655.7L715.3 653.6L716.3 652.1L717.3 652.9L718.3 658.3L719.3 663.8L720.3 669.0L721.3 673.9L722.3 610.9L723.3 600.4L724.3 625.2L725.3 622.2L726.3 621.3L727.3 640.3L728.3 655.1L729.3 650.5L730.3 645.8L731.3 631.2L732.3 609.0L733.3 600.5L734.3 629.8L735.3 644.8L736.3 634.5L737.3 644.6L738.3 645.4L739.3 610.1L740.2 596.3L741.2 622.5L742.2 615.6L743.2 602.1L744.2 616.9L745.2 631.8L746.2 647.6L747.2 661.2L748.2 662.8L749.2 663.2L750.2 659.2L751.2 655.1L752.2 649.3L753.2 643.5L754.2 641.0L755.2 645.9L756.2 644.6L757.2 640.7L758.2 647.6L759.2 653.4L760.2 651.1L761.2 646.2L762.2 620.5L763.2 628.6L764.2 644.2L765.2 653.8L766.2 660.1L767.2 658.0L768.2 658.1L769.2 668.0L770.2 662.4L771.2 646.3L772.2 630.4L773.2 626.6L774.2 642.7L775.2 653.7L776.2 656.0L777.2 651.3L778.2 647.7L779.2 657.9L780.2 667.5L781.2 674.0L782.2 673.7L783.2 668.1L784.2 655.1L785.2 644.9L786.2 655.9L787.2 666.8L788.2 657.6L789.2 647.7L790.1 645.2L791.1 656.2L792.1 664.1L793.1 666.3L794.1 657.2L795.1 633.8L796.1 640.6L797.1 653.2L798.1 636.2L799.1 622.6L800.1 630.7L801.1 639.0L802.1 651.9L803.1 665.1L804.1 668.9L805.1 666.9L806.1 664.9L807.1 661.7L808.1 658.5L809.1 659.8L810.1 663.9L811.1 668.0L812.1 663.6L813.1 660.2L814.1 660.5L815.1 649.6L816.1 640.0L817.1 644.7L818.1 648.2L819.1 640.1L820.1 636.5L821.1 652.6L822.1 668.6L823.1 672.9L824.1 673.9L825.1 668.5L826.1 658.6L827.1 654.5L828.1 660.7L829.1 654.8L830.1 652.1L831.1 659.3L832.1 666.5L833.1 668.5L834.1 668.2L835.1 658.9L836.1 649.7L837.1 644.5L838.1 650.8L839.1 656.6L840.0 658.5L841.0 656.9L842.0 653.0L843.0 657.8L844.0 664.3L845.0 641.9L846.0 624.6L847.0 637.7L848.0 650.9L849.0 654.8L850.0 655.2L851.0 655.4L852.0 658.5L853.0 662.2L854.0 659.6L855.0 657.6L856.0 670.2L857.0 676.7L858.0 680.7L859.0 679.5L860.0 672.1L861.0 645.6L862.0 635.2L863.0 648.8L863.0 682Z" fill="#ea8f00"/><path d="M366.0 682L366.0 675.8L367.0 676.7L368.0 677.0L369.0 682.0L370.0 682.0L371.0 656.3L372.0 637.3L373.0 653.8L374.0 671.0L375.0 682.0L376.0 670.9L377.0 652.6L378.0 664.3L379.0 675.9L380.0 656.4L381.0 656.4L382.0 666.2L383.0 673.1L384.0 679.4L385.0 682.0L386.0 682.0L387.0 682.0L388.0 682.0L389.0 682.0L390.0 682.0L390.9 682.0L391.9 679.8L392.9 668.4L393.9 667.9L394.9 660.7L395.9 648.2L396.9 659.7L397.9 672.6L398.9 680.0L399.9 682.0L400.9 682.0L401.9 670.7L402.9 650.4L403.9 652.9L404.9 660.6L405.9 671.4L406.9 682.0L407.9 682.0L408.9 679.7L409.9 669.4L410.9 661.5L411.9 650.1L412.9 630.4L413.9 633.7L414.9 670.8L415.9 666.5L416.9 662.6L417.9 667.7L418.9 672.6L419.9 676.0L420.9 678.4L421.9 682.0L422.9 682.0L423.9 682.0L424.9 677.2L425.9 668.9L426.9 672.9L427.9 682.0L428.9 681.6L429.9 682.0L430.9 682.0L431.9 682.0L432.9 682.0L433.9 682.0L434.9 679.8L435.9 647.2L436.9 648.4L437.9 660.0L438.9 635.3L439.9 611.8L440.9 630.8L441.8 649.4L442.8 667.2L443.8 677.4L444.8 682.0L445.8 682.0L446.8 682.0L447.8 682.0L448.8 680.5L449.8 668.9L450.8 667.0L451.8 667.1L452.8 670.4L453.8 674.5L454.8 676.4L455.8 677.9L456.8 682.0L457.8 682.0L458.8 682.0L459.8 682.0L460.8 677.8L461.8 658.5L462.8 653.4L463.8 657.6L464.8 664.6L465.8 672.7L466.8 680.1L467.8 680.7L468.8 681.2L469.8 682.0L470.8 682.0L471.8 682.0L472.8 680.4L473.8 669.7L474.8 651.3L475.8 632.0L476.8 645.3L477.8 662.9L478.8 674.4L479.8 681.5L480.8 682.0L481.8 682.0L482.8 677.2L483.8 678.6L484.8 682.0L485.8 674.6L486.8 665.3L487.8 670.2L488.8 672.3L489.8 670.9L490.8 672.7L491.7 677.4L492.7 682.0L493.7 682.0L494.7 682.0L495.7 682.0L496.7 682.0L497.7 682.0L498.7 669.8L499.7 656.7L500.7 661.0L501.7 671.9L502.7 672.9L503.7 670.3L504.7 674.5L505.7 678.2L506.7 671.6L507.7 665.8L508.7 661.2L509.7 657.3L510.7 653.8L511.7 665.3L512.7 678.4L513.7 682.0L514.7 682.0L515.7 675.5L516.7 663.2L517.7 650.7L518.7 656.2L519.7 670.4L520.7 675.4L521.7 677.9L522.7 679.2L523.7 679.8L524.7 677.6L525.7 665.3L526.7 661.1L527.7 658.0L528.7 661.9L529.7 669.3L530.7 675.6L531.7 679.2L532.7 682.0L533.7 682.0L534.7 682.0L535.7 682.0L536.7 682.0L537.7 676.0L538.7 665.5L539.7 657.0L540.6 660.2L541.6 664.2L542.6 671.4L543.6 680.6L544.6 682.0L545.6 682.0L546.6 682.0L547.6 669.2L548.6 646.6L549.6 648.0L550.6 657.8L551.6 667.5L552.6 677.0L553.6 682.0L554.6 679.3L555.6 664.8L556.6 668.8L557.6 677.2L558.6 680.6L559.6 664.4L560.6 648.1L561.6 645.8L562.6 645.7L563.6 652.4L564.6 664.3L565.6 674.9L566.6 681.5L567.6 682.0L568.6 682.0L569.6 682.0L570.6 679.5L571.6 664.1L572.6 648.7L573.6 652.2L574.6 660.7L575.6 668.5L576.6 673.9L577.6 679.8L578.6 682.0L579.6 682.0L580.6 682.0L581.6 682.0L582.6 678.3L583.6 647.6L584.6 637.9L585.6 638.6L586.6 652.0L587.6 668.6L588.6 668.2L589.6 673.2L590.5 682.0L591.5 682.0L592.5 681.3L593.5 665.2L594.5 654.5L595.5 647.9L596.5 652.9L597.5 668.1L598.5 682.0L599.5 682.0L600.5 682.0L601.5 682.0L602.5 678.9L603.5 662.1L604.5 641.9L605.5 654.9L606.5 659.9L607.5 657.0L608.5 663.5L609.5 672.0L610.5 676.2L611.5 677.7L612.5 677.8L613.5 676.2L614.5 669.7L615.5 665.8L616.5 663.8L617.5 661.7L618.5 666.7L619.5 674.5L620.5 680.5L621.5 682.0L622.5 682.0L623.5 682.0L624.5 682.0L625.5 680.9L626.5 677.9L627.5 671.7L628.5 651.3L629.5 644.6L630.5 653.4L631.5 662.2L632.5 670.0L633.5 676.9L634.5 682.0L635.5 682.0L636.5 682.0L637.5 668.7L638.5 655.8L639.5 654.2L640.5 666.4L641.4 676.7L642.4 681.0L643.4 677.2L644.4 665.1L645.4 674.6L646.4 682.0L647.4 682.0L648.4 672.8L649.4 626.1L650.4 633.9L651.4 645.0L652.4 657.8L653.4 670.6L654.4 674.0L655.4 678.0L656.4 682.0L657.4 682.0L658.4 682.0L659.4 682.0L660.4 673.9L661.4 649.7L662.4 646.5L663.4 663.7L664.4 680.1L665.4 682.0L666.4 682.0L667.4 682.0L668.4 680.2L669.4 675.0L670.4 673.6L671.4 673.0L672.4 659.4L673.4 639.7L674.4 635.4L675.4 656.4L676.4 666.6L677.4 665.5L678.4 673.9L679.4 682.0L680.4 682.0L681.4 682.0L682.4 679.3L683.4 668.7L684.4 663.1L685.4 660.1L686.4 664.7L687.4 672.8L688.4 673.7L689.4 670.5L690.4 667.6L691.3 669.6L692.3 676.7L693.3 682.0L694.3 682.0L695.3 682.0L696.3 682.0L697.3 664.1L698.3 654.9L699.3 656.6L700.3 659.0L701.3 663.5L702.3 666.1L703.3 663.9L704.3 660.8L705.3 657.3L706.3 665.0L707.3 671.7L708.3 671.6L709.3 671.8L710.3 673.7L711.3 678.7L712.3 680.0L713.3 677.8L714.3 675.4L715.3 673.0L716.3 672.8L717.3 675.2L718.3 681.9L719.3 682.0L720.3 682.0L721.3 682.0L722.3 638.3L723.3 628.2L724.3 653.6L725.3 651.9L726.3 653.0L727.3 674.2L728.3 682.0L729.3 682.0L730.3 681.0L731.3 666.3L732.3 643.8L733.3 635.7L734.3 666.1L735.3 681.9L736.3 672.5L737.3 682.0L738.3 682.0L739.3 647.9L740.2 632.7L741.2 657.8L742.2 650.3L743.2 636.1L744.2 650.3L745.2 664.7L746.2 679.2L747.2 682.0L748.2 682.0L749.2 682.0L750.2 682.0L751.2 681.1L752.2 674.5L753.2 668.2L754.2 665.3L755.2 669.7L756.2 668.8L757.2 665.2L758.2 671.9L759.2 677.3L760.2 674.3L761.2 668.8L762.2 642.7L763.2 650.2L764.2 665.3L765.2 674.8L766.2 681.3L767.2 679.4L768.2 679.2L769.2 682.0L770.2 681.5L771.2 665.1L772.2 649.0L773.2 645.0L774.2 660.7L775.2 671.2L776.2 673.3L777.2 668.1L778.2 663.9L779.2 673.5L780.2 682.0L781.2 682.0L782.2 682.0L783.2 682.0L784.2 670.1L785.2 660.0L786.2 671.1L787.2 681.9L788.2 672.9L789.2 663.7L790.1 661.8L791.1 672.7L792.1 680.7L793.1 682.0L794.1 675.3L795.1 652.4L796.1 659.2L797.1 671.4L798.1 654.2L799.1 640.4L800.1 648.4L801.1 656.6L802.1 669.1L803.1 681.9L804.1 682.0L805.1 682.0L806.1 679.8L807.1 676.0L808.1 672.1L809.1 673.3L810.1 677.5L811.1 681.9L812.1 677.8L813.1 674.8L814.1 675.3L815.1 664.2L816.1 654.2L817.1 658.5L818.1 661.9L819.1 653.6L820.1 650.1L821.1 666.3L822.1 682.0L823.1 682.0L824.1 682.0L825.1 681.5L826.1 671.0L827.1 666.3L828.1 672.2L829.1 666.5L830.1 664.3L831.1 672.1L832.1 680.0L833.1 682.0L834.1 681.7L835.1 672.3L836.1 663.2L837.1 658.0L838.1 664.4L839.1 670.9L840.0 673.9L841.0 672.9L842.0 669.1L843.0 673.7L844.0 679.7L845.0 657.0L846.0 639.5L847.0 652.6L848.0 666.0L849.0 669.9L850.0 669.9L851.0 669.8L852.0 671.9L853.0 674.2L854.0 670.8L855.0 668.8L856.0 681.8L857.0 682.0L858.0 682.0L859.0 682.0L860.0 682.0L861.0 656.1L862.0 645.2L863.0 658.9L863.0 682Z" fill="#eacc00"/><path d="M375.5 562V682M386.5 562V682M396.5 562V682M417.5 562V682M427.5 562V682M438.5 562V682M458.5 562V682M469.5 562V682M479.5 562V682M500.5 562V682M511.5 562V682M521.5 562V682M542.5 562V682M552.5 562V682M563.5 562V682M583.5 562V682M594.5 562V682M604.5 562V682M625.5 562V682M636.5 562V682M646.5 562V682M667.5 562V682M677.5 562V682M688.5 562V682M708.5 562V682M719.5 562V682M729.5 562V682M750.5 562V682M761.5 562V682M771.5 562V682M792.5 562V682M802.5 562V682M813.5 562V682M833.5 562V682M844.5 562V682M854.5 562V682M365 671.5H865M365 650.5H865M365 629.5H865M365 608.5H865M365 587.5H865M365 566.5H865" stroke="#7c7c7c" stroke-opacity=".3" stroke-dasharray="1 1" fill="none" shape-rendering="crispEdges"/><path d="M406.5 562V682M448.5 562V682M490.5 562V682M531.5 562V682M573.5 562V682M615.5 562V682M656.5 562V682M698.5 562V682M740.5 562V682M781.5 562V682M823.5 562V682M365 661.5H865M365 640.5H865M365 619.5H865M365 598.5H865M365 576.5H865" stroke="#ff2020" stroke-opacity=".38" stroke-dasharray="1 1" fill="none" shape-rendering="crispEdges"/><path d="M375.5 682V684M375.5 560V562M386.5 682V684M386.5 560V562M396.5 682V684M396.5 560V562M417.5 682V684M417.5 560V562M427.5 682V684M427.5 560V562M438.5 682V684M438.5 560V562M458.5 682V684M458.5 560V562M469.5 682V684M469.5 560V562M479.5 682V684M479.5 560V562M500.5 682V684M500.5 560V562M511.5 682V684M511.5 560V562M521.5 682V684M521.5 560V562M542.5 682V684M542.5 560V562M552.5 682V684M552.5 560V562M563.5 682V684M563.5 560V562M583.5 682V684M583.5 560V562M594.5 682V684M594.5 560V562M604.5 682V684M604.5 560V562M625.5 682V684M625.5 560V562M636.5 682V684M636.5 560V562M646.5 682V684M646.5 560V562M667.5 682V684M667.5 560V562M677.5 682V684M677.5 560V562M688.5 682V684M688.5 560V562M708.5 682V684M708.5 560V562M719.5 682V684M719.5 560V562M729.5 682V684M729.5 560V562M750.5 682V684M750.5 560V562M761.5 682V684M761.5 560V562M771.5 682V684M771.5 560V562M792.5 682V684M792.5 560V562M802.5 682V684M802.5 560V562M813.5 682V684M813.5 560V562M833.5 682V684M833.5 560V562M844.5 682V684M844.5 560V562M854.5 682V684M854.5 560V562M363 671.5H365M865 671.5H867M363 650.5H365M865 650.5H867M363 629.5H365M865 629.5H867M363 608.5H365M865 608.5H867M363 587.5H365M865 587.5H867M363 566.5H365M865 566.5H867" stroke="#8c8c8c" stroke-opacity=".8" fill="none" shape-rendering="crispEdges"/><path d="M365.5 682V685M365.5 559V562M406.5 682V685M406.5 559V562M448.5 682V685M448.5 559V562M490.5 682V685M490.5 559V562M531.5 682V685M531.5 559V562M573.5 682V685M573.5 559V562M615.5 682V685M615.5 559V562M656.5 682V685M656.5 559V562M698.5 682V685M698.5 559V562M740.5 682V685M740.5 559V562M781.5 682V685M781.5 559V562M823.5 682V685M823.5 559V562M362 661.5H365M865 661.5H868M362 640.5H365M865 640.5H868M362 619.5H365M865 619.5H868M362 598.5H365M865 598.5H868M362 576.5H365M865 576.5H868" stroke="#ff4040" stroke-opacity=".7" fill="none" shape-rendering="crispEdges"/><path d="M365.9 659.4 L367.9 659.4 L369.8 673.1 L371.8 619.6 L375.0 675.0 L377.0 638.5 L379.0 665.3 L380.3 640.5 L381.8 656.2 L384.2 674.5 L386.1 681.6 L391.4 681.6 L392.7 661.4 L394.4 660.0 L396.0 638.5 L397.9 660.0 L399.8 669.9 L401.2 668.5 L403.1 629.4 L405.1 642.4 L407.7 667.9 L409.6 647.7 L411.6 633.3 L413.5 596.1 L414.9 648.3 L416.8 641.1 L419.4 659.4 L422.0 670.5 L424.0 673.1 L426.2 654.2 L427.9 671.8 L430.5 669.9 L432.5 678.4 L434.4 677.7 L436.1 619.6 L438.0 640.5 L439.7 587.0 L441.3 617.7 L443.2 654.2 L445.2 667.9 L447.1 674.5 L448.4 673.1 L450.0 655.5 L452.1 658.1 L454.3 669.9 L455.6 669.9 L457.3 677.7 L458.9 679.0 L460.5 676.4 L462.2 643.8 L464.1 651.6 L466.7 672.5 L469.3 673.1 L472.2 677.0 L473.9 658.8 L475.9 620.3 L478.2 660.7 L480.8 679.0 L483.0 668.5 L485.0 677.7 L486.6 658.8 L488.3 667.3 L490.2 665.3 L492.8 677.7 L495.4 681.6 L497.4 681.6 L500.0 646.4 L502.0 666.6 L503.9 659.4 L505.6 667.3 L507.2 657.5 L509.1 649.0 L510.8 642.4 L513.1 669.9 L515.0 671.2 L518.0 636.6 L519.9 663.4 L521.9 667.3 L524.5 669.9 L525.8 654.9 L528.0 649.0 L530.4 667.3 L533.0 677.0 L536.9 677.0 L539.5 649.6 L542.1 658.1 L544.1 673.8 L546.7 678.4 L548.9 626.5 L551.0 644.4 L553.9 669.9 L555.8 642.4 L558.4 662.7 L560.8 621.6 L563.0 623.5 L565.3 652.9 L568.2 672.5 L569.8 673.8 L572.8 627.5 L575.4 651.0 L577.6 663.4 L580.0 681.0 L581.9 679.7 L583.9 616.4 L585.8 617.7 L587.5 646.4 L589.1 643.8 L591.7 670.5 L594.0 634.0 L596.0 620.3 L599.0 664.0 L601.2 657.5 L602.9 652.9 L604.4 616.4 L606.0 637.3 L607.7 632.7 L609.9 652.9 L612.0 659.4 L613.6 658.1 L614.9 649.6 L617.8 645.0 L620.1 665.3 L623.4 676.4 L625.3 666.6 L627.3 659.4 L629.0 624.2 L631.9 647.7 L634.5 663.4 L636.4 661.4 L639.0 625.2 L641.2 651.6 L642.9 658.1 L644.6 636.6 L646.2 658.8 L648.2 656.8 L649.5 595.4 L651.4 618.3 L653.4 646.4 L656.0 656.2 L658.2 672.5 L659.9 666.0 L661.9 617.7 L664.5 662.0 L666.8 670.5 L669.1 655.5 L671.7 651.6 L674.0 604.6 L675.9 645.0 L677.5 643.8 L679.2 660.1 L681.1 673.8 L683.7 645.7 L685.7 638.5 L687.7 654.2 L690.9 645.7 L692.9 658.8 L694.8 665.3 L696.1 665.3 L697.8 627.5 L700.1 629.4 L702.0 636.6 L705.3 626.1 L707.2 641.8 L709.9 638.5 L711.8 646.4 L717.0 635.9 L719.0 645.0 L721.3 655.5 L722.7 565.4 L724.2 605.9 L726.2 598.1 L728.1 632.0 L730.7 619.0 L733.0 568.0 L734.9 622.9 L736.6 604.6 L737.9 632.0 L739.9 562.2 L741.5 605.3 L743.1 576.5 L745.1 606.6 L747.1 639.8 L749.0 643.8 L751.3 635.9 L753.9 621.6 L755.5 630.7 L757.2 624.2 L759.1 637.9 L761.1 634.0 L762.4 600.7 L764.1 628.8 L765.9 646.4 L768.0 642.4 L769.6 659.4 L770.9 638.5 L772.8 608.5 L774.8 641.1 L776.1 645.0 L778.1 636.6 L780.0 656.8 L781.6 667.3 L783.3 657.5 L785.0 632.7 L787.2 656.8 L789.8 630.7 L791.8 652.9 L793.7 656.8 L795.4 616.4 L797.0 644.4 L799.0 610.5 L801.2 628.8 L803.5 659.4 L806.1 654.9 L808.5 647.7 L811.1 659.0 L812.9 651.0 L814.4 651.8 L815.8 630.1 L818.0 640.9 L819.9 625.5 L822.3 664.0 L824.5 666.2 L826.7 644.5 L828.1 653.2 L829.8 642.4 L832.1 658.3 L833.9 661.2 L836.8 634.4 L838.9 647.4 L840.4 649.6 L842.3 642.4 L844.0 656.1 L845.9 614.2 L848.3 645.3 L851.2 646.7 L853.4 656.1 L854.8 647.4 L856.3 666.2 L858.4 674.9 L859.9 667.7 L861.6 623.6 L863.5 649.6" stroke="#000" stroke-width="1.1" fill="none" stroke-linejoin="round"/><path d="M361 682.5H869M365.5 686V558" stroke="#5b4848" fill="none" shape-rendering="crispEdges"/><path d="M868 679L873 682.5L868 686Z" fill="#7f1515"/><path d="M362 558L365.5 553L369 558Z" fill="#7f1515"/><text transform="translate(598.5,545) scale(1,1.08)" font-family="Liberation Mono" font-size="13.35" fill="#000" stroke="#000" stroke-width=".08" text-anchor="middle">Localhost - Load Average</text><text transform="translate(448.6,695.2) scale(1,1.08)" font-family="Liberation Mono" font-size="10.2" fill="#000" stroke="#000" stroke-width=".08" text-anchor="middle">Wed 00:00</text><text transform="translate(573.6,695.2) scale(1,1.08)" font-family="Liberation Mono" font-size="10.2" fill="#000" stroke="#000" stroke-width=".08" text-anchor="middle">Wed 06:00</text><text transform="translate(698.6,695.2) scale(1,1.08)" font-family="Liberation Mono" font-size="10.2" fill="#000" stroke="#000" stroke-width=".08" text-anchor="middle">Wed 12:00</text><text transform="translate(823.6,695.2) scale(1,1.08)" font-family="Liberation Mono" font-size="10.2" fill="#000" stroke="#000" stroke-width=".08" text-anchor="middle">Wed 18:00</text><text transform="translate(434.3,710.8) scale(1,1.08)" font-family="Liberation Mono" font-size="11.7" fill="#000" stroke="#000" stroke-width=".08">From 2012/11/13 19:59:17 To 2012/11/14 19:59:17</text><text transform="translate(316,622) rotate(-90) scale(1,1.08)" x="0" y="0" font-family="Liberation Mono" font-size="10.2" stroke="#000" stroke-width=".08" text-anchor="middle">processes in the run queue</text><text transform="translate(884,530.8) rotate(90)" x="0" y="0" font-family="Liberation Mono" font-size="8.3" fill="#b0b0b0" letter-spacing="0">RRDTOOL / TOBI OETIKER</text><text transform="translate(359,686) scale(1,1.08)" font-family="Liberation Mono" font-size="10.2" fill="#000" stroke="#000" stroke-width=".08" text-anchor="end">0.0</text><text transform="translate(359,665) scale(1,1.08)" font-family="Liberation Mono" font-size="10.2" fill="#000" stroke="#000" stroke-width=".08" text-anchor="end">0.2</text><text transform="translate(359,644) scale(1,1.08)" font-family="Liberation Mono" font-size="10.2" fill="#000" stroke="#000" stroke-width=".08" text-anchor="end">0.4</text><text transform="translate(359,623) scale(1,1.08)" font-family="Liberation Mono" font-size="10.2" fill="#000" stroke="#000" stroke-width=".08" text-anchor="end">0.6</text><text transform="translate(359,602) scale(1,1.08)" font-family="Liberation Mono" font-size="10.2" fill="#000" stroke="#000" stroke-width=".08" text-anchor="end">0.8</text><text transform="translate(359,580) scale(1,1.08)" font-family="Liberation Mono" font-size="10.2" fill="#000" stroke="#000" stroke-width=".08" text-anchor="end">1.0</text><rect x="316.5" y="730.5" width="8" height="8" fill="#eacc00" stroke="#000"/><text transform="translate(331.6,738.8) scale(1,1.08)" font-family="Liberation Mono" font-size="11.7" fill="#000" stroke="#000" stroke-width=".08">1 Minute Average</text><text transform="translate(466.2,738.8) scale(1,1.08)" font-family="Liberation Mono" font-size="11.7" fill="#000" stroke="#000" stroke-width=".08">Current:</text><text transform="translate(550.6,738.8) scale(1,1.08)" font-family="Liberation Mono" font-size="11.7" fill="#000" stroke="#000" stroke-width=".08">0.09</text><rect x="316.5" y="744.5" width="8" height="8" fill="#ea8f00" stroke="#000"/><text transform="translate(331.6,752.8) scale(1,1.08)" font-family="Liberation Mono" font-size="11.7" fill="#000" stroke="#000" stroke-width=".08">5 Minute Average</text><text transform="translate(466.2,752.8) scale(1,1.08)" font-family="Liberation Mono" font-size="11.7" fill="#000" stroke="#000" stroke-width=".08">Current:</text><text transform="translate(550.6,752.8) scale(1,1.08)" font-family="Liberation Mono" font-size="11.7" fill="#000" stroke="#000" stroke-width=".08">0.14</text><rect x="316.5" y="758.5" width="8" height="8" fill="#ff0000" stroke="#000"/><text transform="translate(331.6,766.8) scale(1,1.08)" font-family="Liberation Mono" font-size="11.7" fill="#000" stroke="#000" stroke-width=".08">15 Minute Average</text><text transform="translate(466.2,766.8) scale(1,1.08)" font-family="Liberation Mono" font-size="11.7" fill="#000" stroke="#000" stroke-width=".08">Current:</text><text transform="translate(550.6,766.8) scale(1,1.08)" font-family="Liberation Mono" font-size="11.7" fill="#000" stroke="#000" stroke-width=".08">0.08</text><rect x="301" y="813" width="595" height="253" fill="#f3f3f3"/><path d="M302 1066V814H896" stroke="#cbcbcb" stroke-width="2" fill="none"/><path d="M301 1065H895V813" stroke="#999" stroke-width="2" fill="none"/><rect x="365" y="849" width="500" height="120" fill="#fff"/><path d="M375.5 849V969M386.5 849V969M396.5 849V969M417.5 849V969M427.5 849V969M438.5 849V969M458.5 849V969M469.5 849V969M479.5 849V969M500.5 849V969M511.5 849V969M521.5 849V969M542.5 849V969M552.5 849V969M563.5 849V969M583.5 849V969M594.5 849V969M604.5 849V969M625.5 849V969M636.5 849V969M646.5 849V969M667.5 849V969M677.5 849V969M688.5 849V969M708.5 849V969M719.5 849V969M729.5 849V969M750.5 849V969M761.5 849V969M771.5 849V969M792.5 849V969M802.5 849V969M813.5 849V969M833.5 849V969M844.5 849V969M854.5 849V969M365 957.5H865M365 933.5H865M365 909.5H865M365 885.5H865M365 861.5H865" stroke="#7c7c7c" stroke-opacity=".3" stroke-dasharray="1 1" fill="none" shape-rendering="crispEdges"/><path d="M406.5 849V969M448.5 849V969M490.5 849V969M531.5 849V969M573.5 849V969M615.5 849V969M656.5 849V969M698.5 849V969M740.5 849V969M781.5 849V969M823.5 849V969M365 945.5H865M365 921.5H865M365 897.5H865M365 873.5H865M365 849.5H865" stroke="#ff2020" stroke-opacity=".38" stroke-dasharray="1 1" fill="none" shape-rendering="crispEdges"/><path d="M375.5 969V971M375.5 847V849M386.5 969V971M386.5 847V849M396.5 969V971M396.5 847V849M417.5 969V971M417.5 847V849M427.5 969V971M427.5 847V849M438.5 969V971M438.5 847V849M458.5 969V971M458.5 847V849M469.5 969V971M469.5 847V849M479.5 969V971M479.5 847V849M500.5 969V971M500.5 847V849M511.5 969V971M511.5 847V849M521.5 969V971M521.5 847V849M542.5 969V971M542.5 847V849M552.5 969V971M552.5 847V849M563.5 969V971M563.5 847V849M583.5 969V971M583.5 847V849M594.5 969V971M594.5 847V849M604.5 969V971M604.5 847V849M625.5 969V971M625.5 847V849M636.5 969V971M636.5 847V849M646.5 969V971M646.5 847V849M667.5 969V971M667.5 847V849M677.5 969V971M677.5 847V849M688.5 969V971M688.5 847V849M708.5 969V971M708.5 847V849M719.5 969V971M719.5 847V849M729.5 969V971M729.5 847V849M750.5 969V971M750.5 847V849M761.5 969V971M761.5 847V849M771.5 969V971M771.5 847V849M792.5 969V971M792.5 847V849M802.5 969V971M802.5 847V849M813.5 969V971M813.5 847V849M833.5 969V971M833.5 847V849M844.5 969V971M844.5 847V849M854.5 969V971M854.5 847V849M363 957.5H365M865 957.5H867M363 933.5H365M865 933.5H867M363 909.5H365M865 909.5H867M363 885.5H365M865 885.5H867M363 861.5H365M865 861.5H867" stroke="#8c8c8c" stroke-opacity=".8" fill="none" shape-rendering="crispEdges"/><path d="M365.5 969V972M365.5 846V849M406.5 969V972M406.5 846V849M448.5 969V972M448.5 846V849M490.5 969V972M490.5 846V849M531.5 969V972M531.5 846V849M573.5 969V972M573.5 846V849M615.5 969V972M615.5 846V849M656.5 969V972M656.5 846V849M698.5 969V972M698.5 846V849M740.5 969V972M740.5 846V849M781.5 969V972M781.5 846V849M823.5 969V972M823.5 846V849M362 945.5H365M865 945.5H868M362 921.5H365M865 921.5H868M362 897.5H365M865 897.5H868M362 873.5H365M865 873.5H868M362 849.5H365M865 849.5H868" stroke="#ff4040" stroke-opacity=".7" fill="none" shape-rendering="crispEdges"/><path d="M366 969V849H367L368.3 920V969Z" fill="#4668e4"/><path d="M851 969V897L853 849H864V969Z" fill="#4668e4"/><path d="M361 969.5H869M365.5 973V845" stroke="#5b4848" fill="none" shape-rendering="crispEdges"/><path d="M868 966L873 969.5L868 973Z" fill="#7f1515"/><path d="M362 845L365.5 840L369 845Z" fill="#7f1515"/><text transform="translate(598.5,832) scale(1,1.08)" font-family="Liberation Mono" font-size="13.35" fill="#000" stroke="#000" stroke-width=".08" text-anchor="middle">Localhost - Logged in Users</text><text transform="translate(448.6,982.2) scale(1,1.08)" font-family="Liberation Mono" font-size="10.2" fill="#000" stroke="#000" stroke-width=".08" text-anchor="middle">Wed 00:00</text><text transform="translate(573.6,982.2) scale(1,1.08)" font-family="Liberation Mono" font-size="10.2" fill="#000" stroke="#000" stroke-width=".08" text-anchor="middle">Wed 06:00</text><text transform="translate(698.6,982.2) scale(1,1.08)" font-family="Liberation Mono" font-size="10.2" fill="#000" stroke="#000" stroke-width=".08" text-anchor="middle">Wed 12:00</text><text transform="translate(823.6,982.2) scale(1,1.08)" font-family="Liberation Mono" font-size="10.2" fill="#000" stroke="#000" stroke-width=".08" text-anchor="middle">Wed 18:00</text><text transform="translate(434.3,997.8) scale(1,1.08)" font-family="Liberation Mono" font-size="11.7" fill="#000" stroke="#000" stroke-width=".08">From 2012/11/13 19:59:17 To 2012/11/14 19:59:17</text><text transform="translate(316,909) rotate(-90) scale(1,1.08)" x="0" y="0" font-family="Liberation Mono" font-size="10.2" stroke="#000" stroke-width=".08" text-anchor="middle">users</text><text transform="translate(884,817.8) rotate(90)" x="0" y="0" font-family="Liberation Mono" font-size="8.3" fill="#b0b0b0" letter-spacing="0">RRDTOOL / TOBI OETIKER</text><text transform="translate(359,973) scale(1,1.08)" font-family="Liberation Mono" font-size="10.2" fill="#000" stroke="#000" stroke-width=".08" text-anchor="end">0.0</text><text transform="translate(359,949) scale(1,1.08)" font-family="Liberation Mono" font-size="10.2" fill="#000" stroke="#000" stroke-width=".08" text-anchor="end">0.2</text><text transform="translate(359,925) scale(1,1.08)" font-family="Liberation Mono" font-size="10.2" fill="#000" stroke="#000" stroke-width=".08" text-anchor="end">0.4</text><text transform="translate(359,901) scale(1,1.08)" font-family="Liberation Mono" font-size="10.2" fill="#000" stroke="#000" stroke-width=".08" text-anchor="end">0.6</text><text transform="translate(359,877) scale(1,1.08)" font-family="Liberation Mono" font-size="10.2" fill="#000" stroke="#000" stroke-width=".08" text-anchor="end">0.8</text><text transform="translate(359,853) scale(1,1.08)" font-family="Liberation Mono" font-size="10.2" fill="#000" stroke="#000" stroke-width=".08" text-anchor="end">1.0</text><defs>
<radialGradient id="glass" cx=".4" cy=".35" r=".7"><stop offset="0" stop-color="#f0fcff"/><stop offset=".35" stop-color="#b8ecfc"/><stop offset="1" stop-color="#5cb8e8"/></radialGradient>
<linearGradient id="handle" x1="0" y1="0" x2="1" y2="1"><stop offset="0" stop-color="#f8d060"/><stop offset="1" stop-color="#d07810"/></linearGradient>
<radialGradient id="bluec" cx=".5" cy=".4" r=".6"><stop offset="0" stop-color="#a8d0ff"/><stop offset=".6" stop-color="#4a8cf0"/><stop offset="1" stop-color="#1c48c8"/></radialGradient>
<radialGradient id="redc" cx=".5" cy=".45" r=".6"><stop offset="0" stop-color="#f0c0c0"/><stop offset=".55" stop-color="#d87070"/><stop offset="1" stop-color="#a83030"/></radialGradient>
<radialGradient id="silver" cx=".5" cy=".4" r=".6"><stop offset="0" stop-color="#ffffff"/><stop offset="1" stop-color="#c0c4d8"/></radialGradient>
<linearGradient id="orh" x1="0" y1="0" x2="1" y2="1"><stop offset="0" stop-color="#ffa000"/><stop offset=".5" stop-color="#ffc020"/><stop offset="1" stop-color="#f07000"/></linearGradient>
</defs><mask id="wm253" maskUnits="userSpaceOnUse" x="890" y="290" width="40" height="40"><rect x="890" y="290" width="40" height="40" fill="#fff"/><path d="M908.6 305L905.6 299.6" stroke="#000" stroke-width="3.4"/></mask><g transform="translate(0,0)"><path d="M913.2 268.3L918.8 273.6" stroke="#8a5a20" stroke-width="3.4" stroke-linecap="round"/><path d="M913.4 268.5L918.6 273.4" stroke="url(#handle)" stroke-width="2" stroke-linecap="round"/><circle cx="909.4" cy="264.4" r="5.1" fill="url(#glass)" stroke="#52608a" stroke-width="1"/><circle cx="911" cy="287.9" r="6.6" fill="url(#bluec)" stroke="#1030b8" stroke-width="1.2"/><circle cx="911" cy="287.9" r="5.2" fill="none" stroke="#d8e8ff" stroke-opacity=".6" stroke-width=".8"/><path d="M909.9 283.5h2.2v3.4h2.6l-3.7 4.2l-3.7-4.2h2.6z" fill="#fff"/><path d="M911.8 308.2L917.8 314.4" stroke="#b86000" stroke-width="5" stroke-linecap="round"/><path d="M911.8 308.2L917.8 314.4" stroke="url(#orh)" stroke-width="3.6" stroke-linecap="round"/><g mask="url(#wm253)"><circle cx="909" cy="305.6" r="4.9" fill="url(#silver)" stroke="#8088a8" stroke-width="1"/></g><circle cx="911" cy="330.8" r="6.6" fill="url(#redc)" stroke="#2a1010" stroke-width="1.1" stroke-opacity=".85"/><circle cx="911" cy="330.8" r="5.4" fill="none" stroke="#fff" stroke-opacity=".5" stroke-width=".8"/><path d="M909.9 335.3h2.2v-3.4h2.6l-3.7-4.2l-3.7 4.2h2.6z" fill="#fff"/></g><mask id="wm526" maskUnits="userSpaceOnUse" x="890" y="290" width="40" height="40"><rect x="890" y="290" width="40" height="40" fill="#fff"/><path d="M908.6 305L905.6 299.6" stroke="#000" stroke-width="3.4"/></mask><g transform="translate(0,273)"><path d="M913.2 268.3L918.8 273.6" stroke="#8a5a20" stroke-width="3.4" stroke-linecap="round"/><path d="M913.4 268.5L918.6 273.4" stroke="url(#handle)" stroke-width="2" stroke-linecap="round"/><circle cx="909.4" cy="264.4" r="5.1" fill="url(#glass)" stroke="#52608a" stroke-width="1"/><circle cx="911" cy="287.9" r="6.6" fill="url(#bluec)" stroke="#1030b8" stroke-width="1.2"/><circle cx="911" cy="287.9" r="5.2" fill="none" stroke="#d8e8ff" stroke-opacity=".6" stroke-width=".8"/><path d="M909.9 283.5h2.2v3.4h2.6l-3.7 4.2l-3.7-4.2h2.6z" fill="#fff"/><path d="M911.8 308.2L917.8 314.4" stroke="#b86000" stroke-width="5" stroke-linecap="round"/><path d="M911.8 308.2L917.8 314.4" stroke="url(#orh)" stroke-width="3.6" stroke-linecap="round"/><g mask="url(#wm526)"><circle cx="909" cy="305.6" r="4.9" fill="url(#silver)" stroke="#8088a8" stroke-width="1"/></g><circle cx="911" cy="330.8" r="6.6" fill="url(#redc)" stroke="#2a1010" stroke-width="1.1" stroke-opacity=".85"/><circle cx="911" cy="330.8" r="5.4" fill="none" stroke="#fff" stroke-opacity=".5" stroke-width=".8"/><path d="M909.9 335.3h2.2v-3.4h2.6l-3.7-4.2l-3.7 4.2h2.6z" fill="#fff"/></g><mask id="wm813" maskUnits="userSpaceOnUse" x="890" y="290" width="40" height="40"><rect x="890" y="290" width="40" height="40" fill="#fff"/><path d="M908.6 305L905.6 299.6" stroke="#000" stroke-width="3.4"/></mask><g transform="translate(0,560)"><path d="M913.2 268.3L918.8 273.6" stroke="#8a5a20" stroke-width="3.4" stroke-linecap="round"/><path d="M913.4 268.5L918.6 273.4" stroke="url(#handle)" stroke-width="2" stroke-linecap="round"/><circle cx="909.4" cy="264.4" r="5.1" fill="url(#glass)" stroke="#52608a" stroke-width="1"/><circle cx="911" cy="287.9" r="6.6" fill="url(#bluec)" stroke="#1030b8" stroke-width="1.2"/><circle cx="911" cy="287.9" r="5.2" fill="none" stroke="#d8e8ff" stroke-opacity=".6" stroke-width=".8"/><path d="M909.9 283.5h2.2v3.4h2.6l-3.7 4.2l-3.7-4.2h2.6z" fill="#fff"/><path d="M911.8 308.2L917.8 314.4" stroke="#b86000" stroke-width="5" stroke-linecap="round"/><path d="M911.8 308.2L917.8 314.4" stroke="url(#orh)" stroke-width="3.6" stroke-linecap="round"/><g mask="url(#wm813)"><circle cx="909" cy="305.6" r="4.9" fill="url(#silver)" stroke="#8088a8" stroke-width="1"/></g><circle cx="911" cy="330.8" r="6.6" fill="url(#redc)" stroke="#2a1010" stroke-width="1.1" stroke-opacity=".85"/><circle cx="911" cy="330.8" r="5.4" fill="none" stroke="#fff" stroke-opacity=".5" stroke-width=".8"/><path d="M909.9 335.3h2.2v-3.4h2.6l-3.7-4.2l-3.7 4.2h2.6z" fill="#fff"/></g>
</svg>
</body></html>
